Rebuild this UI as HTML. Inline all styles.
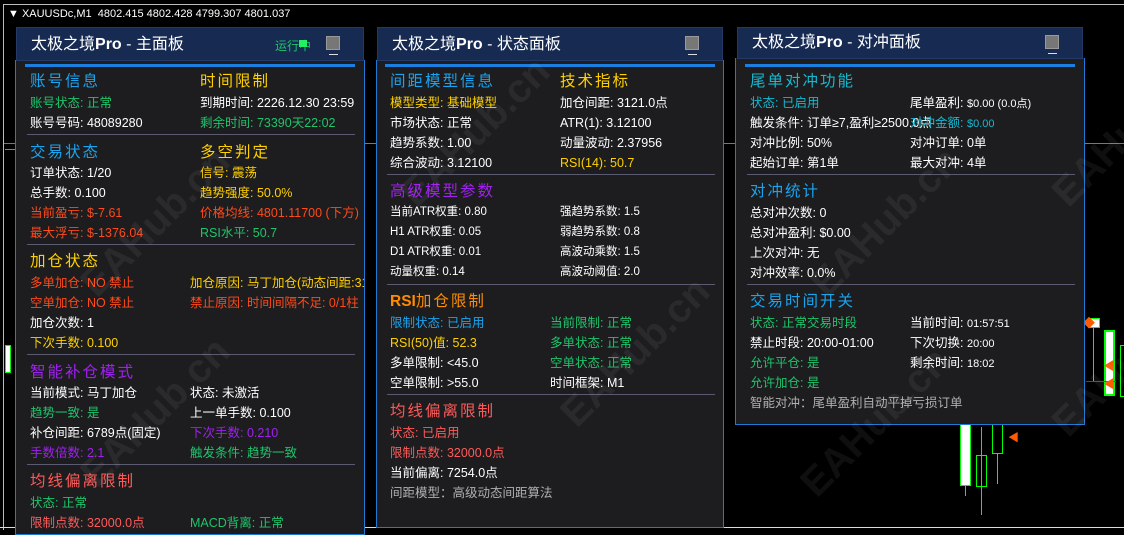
<!DOCTYPE html>
<html><head><meta charset="utf-8"><style>
*{margin:0;padding:0;box-sizing:border-box}
body{width:1124px;height:530px;background:#000;position:relative;overflow:hidden;font-family:"Liberation Sans","Noto Sans CJK SC",sans-serif;color:#fff}
.a{position:absolute}
.t{position:absolute;white-space:nowrap;font-size:12.5px;line-height:16px}
.h{position:absolute;white-space:nowrap;font-size:15.5px;line-height:18px;letter-spacing:2px}
.hd{position:absolute;background:#162a52;border:1px solid #243a66;height:34px}
.hd span{position:absolute;left:14px;top:7px;font-size:16px;line-height:20px;white-space:nowrap}
.bd{position:absolute;background:#1d1d1f;border:1px solid #1f7ad6;border-top:none}
.bl{position:absolute;height:3px;background:#1a7fe0}
.sp{position:absolute;height:1px;background:#5a5a70}
.btn{position:absolute;width:14px;height:14px;background:#777;border:1px solid #999}
.btn:after{content:"";position:absolute;left:2px;top:17px;width:9px;height:1px;background:#ddd}
.c{color:#1aa3ee}.y{color:#ffd000}.g{color:#1fc46b}.r{color:#ff4a1a}.p{color:#a020f0}.k{color:#ff5a5a}.o{color:#ff8c00}.gr{color:#b0b0b0}.w{color:#fff}
.wm{position:absolute;font-size:40px;font-weight:bold;color:rgba(255,255,255,0.06);transform:rotate(-45deg);white-space:nowrap}
</style></head><body>
<div class="a" style="left:3px;top:4px;width:1121px;height:1px;background:#bbb"></div>
<div class="a" style="left:3px;top:4px;width:1px;height:526px;background:#bbb"></div>
<div class="a" style="left:0;top:527px;width:1124px;height:1px;background:#ddd"></div>
<div class="a" style="left:8px;top:8px;font-size:11px;line-height:12px;white-space:nowrap">▼ XAUUSDc,M1&nbsp; 4802.415 4802.428 4799.307 4801.037</div>
<div class="a" style="left:4px;top:143px;width:1120px;height:1px;background:#777"></div>
<div class="a" style="left:5px;top:149px;width:12px;height:1px;background:#2c2"></div>
<div class="a" style="left:5px;top:345px;width:6px;height:28px;background:#fff;border:1px solid #0f0"></div>
<div class="a" style="left:1088px;top:318px;width:12px;height:10px;background:#fff;border:1px solid #0f0"></div>
<div class="a" style="left:1093px;top:328px;width:1px;height:53px;background:#0f0"></div>
<div class="a" style="left:1104px;top:330px;width:11px;height:66px;background:#fff;border:2px solid #0f0"></div>
<div class="a" style="left:1120px;top:345px;width:6px;height:52px;border:1px solid #0f0"></div>
<div class="a" style="left:1086px;top:381px;width:30px;height:1px;background:#f00"></div>
<div class="a" style="left:1083px;top:314px;color:#ff5a00;font-size:12px">◆</div>
<div class="a" style="left:1103px;top:357px;color:#ff5a00;font-size:12px">◀</div>
<div class="a" style="left:1103px;top:375px;color:#ff5a00;font-size:12px">◀</div>
<div class="a" style="left:960px;top:424px;width:11px;height:62px;background:#fff;border:1px solid #0f0"></div>
<div class="a" style="left:965px;top:486px;width:1px;height:10px;background:#0f0"></div>
<div class="a" style="left:976px;top:455px;width:11px;height:32px;border:1px solid #0f0"></div>
<div class="a" style="left:981px;top:427px;width:1px;height:88px;background:#0f0"></div>
<div class="a" style="left:992px;top:424px;width:11px;height:30px;border:1px solid #0f0"></div>
<div class="a" style="left:997px;top:454px;width:1px;height:30px;background:#0f0"></div>
<div class="a" style="left:1008px;top:429px;color:#ff5a00;font-size:11px">◀</div>

<!-- PANEL 1 -->
<div class="bd" style="left:15px;top:60px;width:350px;height:475px"></div>
<div class="hd" style="left:16px;top:27px;width:348px"><span>太极之境<b>Pro</b> - 主面板</span></div>
<div class="a g" style="left:275px;top:37px;font-size:12px">运行中</div>
<div class="a" style="left:299px;top:40px;width:8px;height:7px;background:#2e6"></div>
<div class="btn" style="left:326px;top:36px"></div>
<div class="bl" style="left:25px;top:64px;width:330px"></div>
<div class="h c" style="left:30px;top:73px">账号信息</div><div class="h y" style="left:200px;top:73px">时间限制</div>
<div class="t g" style="left:30px;top:95px">账号状态: 正常</div><div class="t w" style="left:200px;top:95px">到期时间: 2226.12.30 23:59</div>
<div class="t w" style="left:30px;top:115px">账号号码: 48089280</div><div class="t g" style="left:200px;top:115px">剩余时间: 73390天22:02</div>
<div class="sp" style="left:27px;top:134px;width:328px"></div>
<div class="h c" style="left:30px;top:144px">交易状态</div><div class="h y" style="left:200px;top:144px">多空判定</div>
<div class="t w" style="left:30px;top:165px">订单状态: 1/20</div><div class="t y" style="left:200px;top:165px">信号: 震荡</div>
<div class="t w" style="left:30px;top:185px">总手数: 0.100</div><div class="t y" style="left:200px;top:185px">趋势强度: 50.0%</div>
<div class="t r" style="left:30px;top:205px">当前盈亏: $-7.61</div><div class="t r" style="left:200px;top:205px">价格均线: 4801.11700 (下方)</div>
<div class="t r" style="left:30px;top:225px">最大浮亏: $-1376.04</div><div class="t g" style="left:200px;top:225px">RSI水平: 50.7</div>
<div class="sp" style="left:27px;top:244px;width:328px"></div>
<div class="h y" style="left:30px;top:253px">加仓状态</div>
<div class="t r" style="left:30px;top:275px">多单加仓: NO 禁止</div><div class="t y" style="left:190px;top:275px;width:174px;overflow:hidden">加仓原因: 马丁加仓(动态间距:3121点</div>
<div class="t r" style="left:30px;top:295px">空单加仓: NO 禁止</div><div class="t r" style="left:190px;top:295px">禁止原因: 时间间隔不足: 0/1柱</div>
<div class="t w" style="left:30px;top:315px">加仓次数: 1</div>
<div class="t y" style="left:30px;top:335px">下次手数: 0.100</div>
<div class="sp" style="left:27px;top:354px;width:328px"></div>
<div class="h p" style="left:30px;top:364px">智能补仓模式</div>
<div class="t w" style="left:30px;top:385px">当前模式: 马丁加仓</div><div class="t w" style="left:190px;top:385px">状态: 未激活</div>
<div class="t g" style="left:30px;top:405px">趋势一致: 是</div><div class="t w" style="left:190px;top:405px">上一单手数: 0.100</div>
<div class="t w" style="left:30px;top:425px">补仓间距: 6789点(固定)</div><div class="t p" style="left:190px;top:425px">下次手数: 0.210</div>
<div class="t p" style="left:30px;top:445px">手数倍数: 2.1</div><div class="t g" style="left:190px;top:445px">触发条件: 趋势一致</div>
<div class="sp" style="left:27px;top:464px;width:328px"></div>
<div class="h k" style="left:30px;top:473px">均线偏离限制</div>
<div class="t g" style="left:30px;top:495px">状态: 正常</div>
<div class="t k" style="left:30px;top:515px">限制点数: 32000.0点</div><div class="t g" style="left:190px;top:515px">MACD背离: 正常</div>

<!-- PANEL 2 -->
<div class="bd" style="left:376px;top:60px;width:348px;height:468px"></div>
<div class="hd" style="left:377px;top:27px;width:346px"><span>太极之境<b>Pro</b> - 状态面板</span></div>
<div class="btn" style="left:685px;top:36px"></div>
<div class="bl" style="left:385px;top:64px;width:330px"></div>
<div class="h c" style="left:390px;top:73px">间距模型信息</div><div class="h y" style="left:560px;top:73px">技术指标</div>
<div class="t y" style="left:390px;top:95px">模型类型: 基础模型</div><div class="t w" style="left:560px;top:95px">加仓间距: 3121.0点</div>
<div class="t w" style="left:390px;top:115px">市场状态: 正常</div><div class="t w" style="left:560px;top:115px">ATR(1): 3.12100</div>
<div class="t w" style="left:390px;top:135px">趋势系数: 1.00</div><div class="t w" style="left:560px;top:135px">动量波动: 2.37956</div>
<div class="t w" style="left:390px;top:155px">综合波动: 3.12100</div><div class="t y" style="left:560px;top:155px">RSI(14): 50.7</div>
<div class="sp" style="left:387px;top:174px;width:328px"></div>
<div class="h p" style="left:390px;top:183px">高级模型参数</div>
<div class="t w" style="left:390px;top:204px;font-size:11.5px">当前ATR权重: 0.80</div><div class="t w" style="left:560px;top:204px;font-size:11.5px">强趋势系数: 1.5</div>
<div class="t w" style="left:390px;top:224px;font-size:11.5px">H1 ATR权重: 0.05</div><div class="t w" style="left:560px;top:224px;font-size:11.5px">弱趋势系数: 0.8</div>
<div class="t w" style="left:390px;top:244px;font-size:11.5px">D1 ATR权重: 0.01</div><div class="t w" style="left:560px;top:244px;font-size:11.5px">高波动乘数: 1.5</div>
<div class="t w" style="left:390px;top:264px;font-size:11.5px">动量权重: 0.14</div><div class="t w" style="left:560px;top:264px;font-size:11.5px">高波动阈值: 2.0</div>
<div class="sp" style="left:387px;top:284px;width:328px"></div>
<div class="h o" style="left:390px;top:293px"><b style="letter-spacing:0">RSI</b>加仓限制</div>
<div class="t c" style="left:390px;top:315px">限制状态: 已启用</div><div class="t g" style="left:550px;top:315px">当前限制: 正常</div>
<div class="t y" style="left:390px;top:335px">RSI(50)值: 52.3</div><div class="t g" style="left:550px;top:335px">多单状态: 正常</div>
<div class="t w" style="left:390px;top:355px">多单限制: &lt;45.0</div><div class="t g" style="left:550px;top:355px">空单状态: 正常</div>
<div class="t w" style="left:390px;top:375px">空单限制: &gt;55.0</div><div class="t w" style="left:550px;top:375px">时间框架: M1</div>
<div class="sp" style="left:387px;top:394px;width:328px"></div>
<div class="h k" style="left:390px;top:403px">均线偏离限制</div>
<div class="t k" style="left:390px;top:425px">状态: 已启用</div>
<div class="t k" style="left:390px;top:445px">限制点数: 32000.0点</div>
<div class="t w" style="left:390px;top:465px">当前偏离: 7254.0点</div>
<div class="t gr" style="left:390px;top:485px">间距模型：高级动态间距算法</div>

<!-- PANEL 3 -->
<div class="bd" style="left:735px;top:58px;width:350px;height:367px"></div>
<div class="hd" style="left:737px;top:27px;width:346px;height:32px"><span style="top:5px">太极之境<b>Pro</b> - 对冲面板</span></div>
<div class="btn" style="left:1045px;top:35px"></div>
<div class="bl" style="left:745px;top:64px;width:330px"></div>
<div class="h c" style="left:750px;top:73px;color:#17b8d0">尾单对冲功能</div>
<div class="t" style="left:750px;top:95px;color:#17b8d0">状态: 已启用</div><div class="t w" style="left:910px;top:95px">尾单盈利: <span style="font-size:11px">$0.00 (0.0点)</span></div>
<div class="t w" style="left:750px;top:115px">触发条件: 订单≥7,盈利≥2500.0点</div><div class="t" style="left:910px;top:115px;color:#17b8d0">对冲金额: <span style="font-size:11px">$0.00</span></div>
<div class="t w" style="left:750px;top:135px">对冲比例: 50%</div><div class="t w" style="left:910px;top:135px">对冲订单: 0单</div>
<div class="t w" style="left:750px;top:155px">起始订单: 第1单</div><div class="t w" style="left:910px;top:155px">最大对冲: 4单</div>
<div class="sp" style="left:747px;top:174px;width:328px"></div>
<div class="h c" style="left:750px;top:183px">对冲统计</div>
<div class="t w" style="left:750px;top:205px">总对冲次数: 0</div>
<div class="t w" style="left:750px;top:225px">总对冲盈利: $0.00</div>
<div class="t w" style="left:750px;top:245px">上次对冲: 无</div>
<div class="t w" style="left:750px;top:265px">对冲效率: 0.0%</div>
<div class="sp" style="left:747px;top:284px;width:328px"></div>
<div class="h c" style="left:750px;top:293px">交易时间开关</div>
<div class="t g" style="left:750px;top:315px">状态: 正常交易时段</div><div class="t w" style="left:910px;top:315px">当前时间: <span style="font-size:11px">01:57:51</span></div>
<div class="t w" style="left:750px;top:335px">禁止时段: 20:00-01:00</div><div class="t w" style="left:910px;top:335px">下次切换: <span style="font-size:11px">20:00</span></div>
<div class="t g" style="left:750px;top:355px">允许平仓: 是</div><div class="t w" style="left:910px;top:355px">剩余时间: <span style="font-size:11px">18:02</span></div>
<div class="t g" style="left:750px;top:375px">允许加仓: 是</div>
<div class="t gr" style="left:750px;top:395px">智能对冲：尾单盈利自动平掉亏损订单</div>

<div class="wm" style="left:60px;top:200px">EAHub.cn</div>
<div class="wm" style="left:60px;top:390px">EAHub.cn</div>
<div class="wm" style="left:380px;top:110px">EAHub.cn</div>
<div class="wm" style="left:540px;top:330px">EAHub.cn</div>
<div class="wm" style="left:790px;top:200px">EAHub.cn</div>
<div class="wm" style="left:780px;top:400px">EAHub.cn</div>
<div class="wm" style="left:1040px;top:130px">EAHub</div>
<div class="wm" style="left:1040px;top:360px">EAHub</div>
</body></html>
